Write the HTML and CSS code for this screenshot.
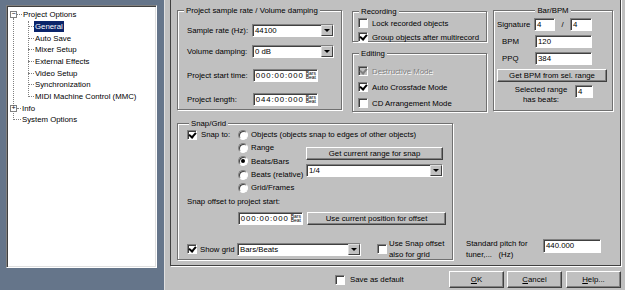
FILE: index.html
```html
<!DOCTYPE html>
<html lang="en">
<head>
    <meta charset="UTF-8">
    <title>Preferences</title>
    <link rel="stylesheet" href="styles.css">
</head>
<body>
<div class="app">
    <div class="side">
        <div class="tree">
            <div class="row top"><span class="tg">&minus;</span><span class="stub short"></span><span class="lbl">Project Options</span></div>
            <div class="kids">
                <div class="row kid"><span class="stub"></span><span class="lbl sel">General</span></div>
                <div class="row kid"><span class="stub"></span><span class="lbl">Auto Save</span></div>
                <div class="row kid"><span class="stub"></span><span class="lbl">Mixer Setup</span></div>
                <div class="row kid"><span class="stub"></span><span class="lbl">External Effects</span></div>
                <div class="row kid"><span class="stub"></span><span class="lbl">Video Setup</span></div>
                <div class="row kid"><span class="stub"></span><span class="lbl">Synchronization</span></div>
                <div class="row kid"><span class="stub"></span><span class="lbl">MIDI Machine Control (MMC)</span></div>
            </div>
            <div class="row top"><span class="tg">+</span><span class="stub tiny"></span><span class="lbl">Info</span></div>
            <div class="row leaf"><span class="stub long"></span><span class="lbl">System Options</span></div>
        </div>
    </div>

    <div class="main">
        <div class="panel">
            <div class="toprow">
                <div class="group g1">
                    <span class="gtitle">Project sample rate / Volume damping</span>
                    <div class="frow r1">
                        <span class="flabel">Sample rate (Hz):</span>
                        <div class="field select w82"><span>44100</span><span class="drop"></span></div>
                    </div>
                    <div class="frow r2">
                        <span class="flabel">Volume damping:</span>
                        <div class="field select w82"><span>0 dB</span><span class="drop"></span></div>
                    </div>
                    <div class="frow r3">
                        <span class="flabel">Project start time:</span>
                        <div class="field time"><span class="tval">000:00:000</span><span class="bb">Bars<br>Beat</span></div>
                    </div>
                    <div class="frow r3">
                        <span class="flabel">Project length:</span>
                        <div class="field time"><span class="tval">044:00:000</span><span class="bb">Bars<br>Beat</span></div>
                    </div>
                </div>

                <div class="col2">
                    <div class="group rec">
                        <span class="gtitle">Recording</span>
                        <div class="crow"><span class="cb"></span><span>Lock recorded objects</span></div>
                        <div class="crow"><span class="cb on"></span><span>Group objects after multirecord</span></div>
                    </div>
                    <div class="group edit">
                        <span class="gtitle">Editing</span>
                        <div class="crow off"><span class="cb on"></span><span>Destructive Mode</span></div>
                        <div class="crow"><span class="cb on"></span><span>Auto Crossfade Mode</span></div>
                        <div class="crow"><span class="cb"></span><span>CD Arrangement Mode</span></div>
                    </div>
                </div>

                <div class="group bpm">
                    <span class="gtitle center">Bar/BPM</span>
                    <div class="brow sig">
                        <span class="blabel">Signature</span>
                        <div class="field w21">4</div>
                        <span class="slash">/</span>
                        <div class="field w22">4</div>
                    </div>
                    <div class="brow">
                        <span class="blabel ind">BPM</span>
                        <div class="field w57">120</div>
                    </div>
                    <div class="brow">
                        <span class="blabel ind">PPQ</span>
                        <div class="field w57">384</div>
                    </div>
                    <div class="btn bpmbtn">Get BPM from sel. range</div>
                    <div class="brow beats">
                        <span class="beatlabel">Selected range<br>has beats:</span>
                        <div class="field w18">4</div>
                    </div>
                </div>
            </div>

            <div class="snaprow">
                <div class="group snap">
                    <span class="gtitle snaptitle">Snap/Grid</span>
                    <div class="snaptop">
                        <div class="snapcheck"><div class="crow"><span class="cb on"></span><span>Snap to:</span></div></div>
                        <div class="radios">
                            <div class="rrow"><span class="rb"></span><span>Objects (objects snap to edges of other objects)</span></div>
                            <div class="rrow"><span class="rb"></span><span>Range</span></div>
                            <div class="rrow"><span class="rb on"></span><span>Beats/Bars</span></div>
                            <div class="rrow"><span class="rb"></span><span>Beats (relative)</span></div>
                            <div class="rrow"><span class="rb"></span><span>Grid/Frames</span></div>
                        </div>
                        <div class="snapright">
                            <div class="btn w137">Get current range for snap</div>
                            <div class="field select w137 quarter"><span>1/4</span><span class="drop"></span></div>
                        </div>
                    </div>
                    <div class="offlabel">Snap offset to project start:</div>
                    <div class="offrow">
                        <div class="field time"><span class="tval">000:00:000</span><span class="bb">Bars<br>Beat</span></div>
                        <div class="btn w139">Use current position for offset</div>
                    </div>
                    <div class="gridrow">
                        <div class="crow showgrid"><span class="cb on"></span><span>Show grid</span></div>
                        <div class="field select w124"><span>Bars/Beats</span><span class="drop"></span></div>
                        <div class="crow usesnap"><span class="cb"></span><span class="two">Use Snap offset<br>also for grid</span></div>
                    </div>
                </div>
                <div class="pitch">
                    <span class="pitchlabel">Standard pitch for<br>tuner,...&nbsp;&nbsp;&nbsp;(Hz)</span>
                    <div class="field w58">440.000</div>
                </div>
            </div>
        </div>

        <div class="bottom">
            <div class="crow savedef"><span class="cb"></span><span>Save as default</span></div>
            <div class="btn dlg ok"><span><u>O</u>K</span></div>
            <div class="btn dlg"><span><u>C</u>ancel</span></div>
            <div class="btn dlg help"><span><u>H</u>elp...</span></div>
        </div>
    </div>
</div>
</body>
</html>
```

FILE: styles.css
```css
* {
    box-sizing: border-box;
}
body {
    margin: 0;
    font-family: "Liberation Sans", Arial, sans-serif;
    font-size: 7.8px;
    color: #000;
}
.app {
    display: flex;
    width: 625px;
    height: 290px;
    overflow: hidden;
}

/* left tree */
.side {
    width: 164px;
    background-color: #65758a;
    padding: 5px 0 0 6px;
}
.tree {
    position: relative;
    width: 151px;
    height: 263px;
    background-color: #fff;
    border: 1px solid;
    border-color: #808080 #fff #fff #808080;
    box-shadow: inset 1px 1px #404040, inset -1px -1px #dfdfdf;
    padding-top: 3px;
}
.tree::before {
    content: "";
    position: absolute;
    left: 6px;
    top: 12px;
    height: 102px;
    border-left: 1px dotted #808080;
}
.row {
    display: flex;
    align-items: center;
    height: 11.67px;
    white-space: nowrap;
}
.row.top { padding-left: 3px; }
.row.kid { padding-left: 21px; }
.row.leaf { padding-left: 6px; }
.tg {
    position: relative;
    width: 7px;
    height: 7px;
    border: 1px solid #808080;
    background-color: #fff;
    font-size: 7px;
    line-height: 5px;
    text-align: center;
    font-family: "Liberation Mono", monospace;
}
.stub {
    width: 6px;
    border-top: 1px dotted #808080;
}
.stub.short { width: 5px; }
.stub.tiny { width: 4px; }
.stub.long { width: 8px; }
.lbl {
    padding: 0 1px;
    line-height: 11px;
}
.lbl.sel {
    background-color: #0a246a;
    color: #fff;
}
.kids {
    position: relative;
}
.kids::before {
    content: "";
    position: absolute;
    left: 21px;
    top: 0;
    height: 76px;
    border-left: 1px dotted #808080;
}

/* right side */
.main {
    flex: 1;
    background-color: #c0c0c0;
    border-left: 1px solid #dfdfdf;
    padding: 0 4px 0 5px;
    display: flex;
    flex-direction: column;
}
.panel {
    height: 268px;
    margin-top: -2px;
    border: 1px solid #404040;
    box-shadow: 1px 1px #fff;
    padding-left: 6px;
}
.toprow {
    display: flex;
    align-items: flex-start;
    margin-top: 11px;
}
.group {
    position: relative;
    border: 1px solid #707070;
    box-shadow: inset 1px 1px #fff, 1px 1px #fff;
}
.gtitle {
    position: absolute;
    top: -6px;
    left: 6px;
    padding: 0 2px;
    line-height: 11px;
    background-color: #c0c0c0;
    white-space: nowrap;
}
.gtitle.center {
    left: 0;
    right: 0;
    width: max-content;
    margin: 0 auto;
}

/* fields */
.field {
    height: 13px;
    background-color: #fff;
    border: 1px solid;
    border-color: #808080 #fff #fff #808080;
    box-shadow: inset 1px 1px #404040;
    padding-left: 2px;
    line-height: 11px;
    white-space: nowrap;
}
.select {
    display: flex;
    justify-content: space-between;
}
.drop {
    position: relative;
    width: 12px;
    height: 11px;
    background-color: #c0c0c0;
    border: 1px solid;
    border-color: #dfdfdf #404040 #404040 #dfdfdf;
}
.drop::after {
    content: "";
    position: absolute;
    left: 2px;
    top: 3px;
    border-top: 3px solid #000;
    border-left: 3px solid transparent;
    border-right: 3px solid transparent;
}
.time {
    display: flex;
    justify-content: flex-end;
    align-items: center;
    width: 65px;
    padding-right: 1px;
}
.tval {
    letter-spacing: 0.9px;
}
.bb {
    font-size: 5px;
    line-height: 4.5px;
    margin-left: 2px;
    margin-top: -1px;
}
.w18 { width: 18px; }
.w21 { width: 21px; }
.w22 { width: 22px; }
.w57 { width: 57px; }
.w58 { width: 58px; }
.w82 { width: 82px; }
.w124 { width: 124px; }
.w137 { width: 137px; }
.w139 { width: 139px; }

.btn {
    height: 13px;
    background-color: #c0c0c0;
    border: 1px solid;
    border-color: #fff #404040 #404040 #fff;
    box-shadow: inset -1px -1px #808080;
    text-align: center;
    line-height: 11px;
    white-space: nowrap;
}

/* checkboxes and radios */
.crow {
    display: flex;
    align-items: center;
    height: 14px;
    white-space: nowrap;
}
.cb {
    position: relative;
    flex: none;
    width: 10px;
    height: 10px;
    margin-right: 4px;
    background-color: #fff;
    border: 1px solid;
    border-color: #808080 #fff #fff #808080;
    box-shadow: inset 1px 1px #404040;
}
.cb.on::after {
    content: "";
    position: absolute;
    left: 2px;
    top: 0;
    width: 3px;
    height: 5px;
    border: solid #000;
    border-width: 0 2px 2px 0;
    transform: rotate(40deg);
}
.crow.off {
    color: #808080;
    text-shadow: 1px 1px #fff;
}
.crow.off .cb {
    background-color: #c0c0c0;
}
.crow.off .cb::after {
    border-color: #808080;
}
.rb {
    position: relative;
    flex: none;
    width: 10px;
    height: 10px;
    margin-right: 3px;
    border-radius: 50%;
    background-color: #fff;
    border: 1px solid;
    border-color: #808080 #fff #fff #808080;
    box-shadow: inset 1px 1px #404040;
}
.rb.on::after {
    content: "";
    position: absolute;
    left: 2px;
    top: 2px;
    width: 4px;
    height: 4px;
    border-radius: 50%;
    background-color: #000;
}

/* project sample rate group */
.g1 {
    width: 165px;
    height: 100px;
    padding: 13px 0 0 9px;
}
.frow {
    display: flex;
    align-items: center;
    height: 13px;
}
.r2 { margin-top: 8px; }
.r3 { margin-top: 11px; }
.flabel {
    width: 65px;
    white-space: nowrap;
}
.r3 .field { margin-left: 1px; }

/* recording / editing */
.col2 {
    width: 135px;
    margin: 1px 0 0 10px;
}
.rec {
    height: 31px;
    padding: 4px 0 0 5px;
}
.edit {
    height: 59px;
    margin-top: 11px;
    padding: 10px 0 0 5px;
}
.edit .crow {
    margin-bottom: 2px;
}

/* bar / bpm */
.bpm {
    width: 120px;
    height: 101px;
    margin-left: 6px;
    padding: 7px 0 0 3px;
}
.brow {
    display: flex;
    align-items: center;
    height: 13px;
    margin-bottom: 4px;
}
.blabel {
    width: 37px;
}
.blabel.ind {
    width: 38px;
    padding-left: 5px;
}
.slash {
    width: 15px;
    text-align: center;
}
.bpmbtn {
    width: 110px;
    margin-top: 1px;
}
.beats {
    align-items: flex-start;
    margin-top: 3px;
}
.beatlabel {
    width: 78px;
    padding-left: 10px;
    text-align: center;
    line-height: 9.5px;
}

/* snap / grid */
.snaprow {
    display: flex;
    align-items: flex-end;
    margin-top: 11px;
}
.snap {
    width: 276px;
    height: 137px;
    padding: 4px 0 0 9px;
}
.gtitle.snaptitle {
    left: 11px;
}
.snaptop {
    display: flex;
    align-items: flex-start;
}
.snapcheck {
    width: 51px;
}
.snapcheck .crow {
    height: 13px;
}
.radios {
    width: 68px;
}
.rrow {
    display: flex;
    align-items: center;
    height: 13.3px;
    white-space: nowrap;
}
.snapright {
    margin-top: 19px;
}
.quarter {
    margin-top: 4px;
}
.offlabel {
    margin-top: 2px;
    line-height: 11px;
}
.offrow {
    display: flex;
    margin: 5px 0 0 51px;
}
.offrow .btn {
    margin-left: 4px;
}
.gridrow {
    display: flex;
    align-items: center;
    margin-top: 13px;
}
.showgrid {
    width: 50px;
}
.showgrid .cb {
    margin-right: 3px;
}
.usesnap {
    margin-left: 16px;
    height: 22px;
}
.usesnap .cb {
    margin-right: 2px;
}
.two {
    line-height: 11px;
}
.pitch {
    display: flex;
    align-items: flex-start;
    margin-left: 13px;
}
.pitchlabel {
    width: 77px;
    line-height: 11px;
    white-space: nowrap;
}
.pitch .field {
    height: 14px;
    margin-top: 1px;
}

/* bottom buttons */
.bottom {
    display: flex;
    align-items: center;
    height: 17px;
    margin-top: 5px;
}
.savedef {
    margin-left: 165px;
}
.savedef .cb {
    margin-right: 5px;
}
.btn.dlg {
    width: 55px;
    height: 17px;
    line-height: 15px;
    margin-left: 3px;
}
.btn.ok {
    margin-left: auto;
}
.btn.help {
    margin-left: 4px;
}
```
